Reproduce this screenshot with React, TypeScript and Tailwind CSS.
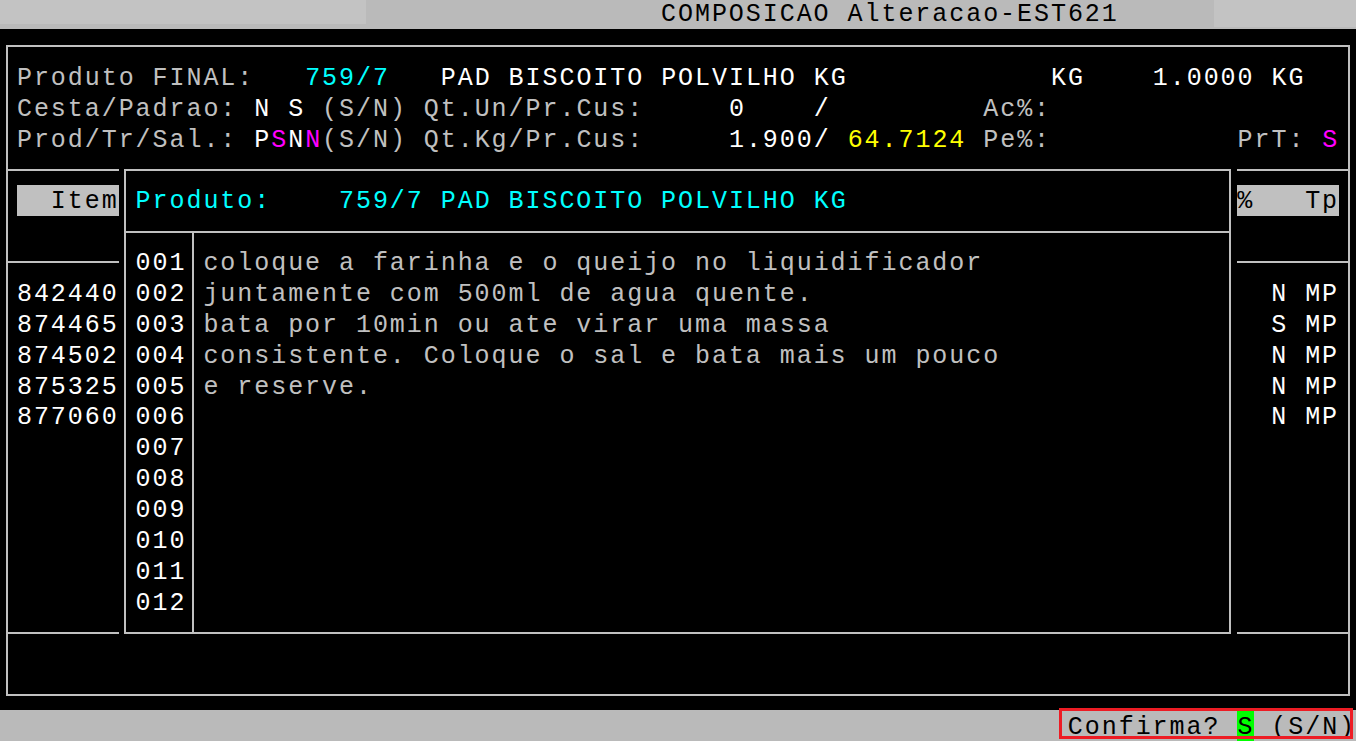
import React from "react";

const G = "text-[#c0c0c0]";
const W = "text-white";
const C = "text-[#00ffff]";
const M = "text-[#ff00ff]";
const Y = "text-[#ffff00]";

type Seg = [string, string];

function Row({ segs, className = "" }: { segs: Seg[]; className?: string }) {
  return (
    <div className={`h-[30.875px] leading-[33px] whitespace-pre ${className}`}>
      {segs.map(([t, c], i) => (
        <span key={i} className={c}>
          {t}
        </span>
      ))}
    </div>
  );
}

const tableRows: [string, string][] = [
  ["842440", "  N MP"],
  ["874465", "  S MP"],
  ["874502", "  N MP"],
  ["875325", "  N MP"],
  ["877060", "  N MP"],
  ["", ""],
  ["", ""],
  ["", ""],
  ["", ""],
  ["", ""],
  ["", ""],
];

const notes = [
  "coloque a farinha e o queijo no liquidificador",
  "juntamente com 500ml de agua quente.",
  "bata por 10min ou ate virar uma massa",
  "consistente. Coloque o sal e bata mais um pouco",
  "e reserve.",
  "",
  "",
  "",
  "",
  "",
  "",
  "",
];

export default function App() {
  return (
    <div className="relative w-[1356px] h-[741px] overflow-hidden bg-black font-['Liberation_Mono',monospace] text-[25px] tracking-[1.95px] text-[#c0c0c0]">
      {/* title bar */}
      <div className="h-[30.875px]">
        <div className="flex h-[29px] items-start bg-[#bababa] text-black">
          <div className="h-[24px] w-[366px] bg-[#c3c3c3]" />
          <div className="flex-1 pl-[295.05px] leading-[29px] whitespace-pre">
            COMPOSICAO Alteracao-EST621
          </div>
          <div className="h-[27px] w-[142px] bg-[#c3c3c3]" />
        </div>
      </div>

      {/* main frame */}
      <div className="h-[679.25px] pt-[14.44px]">
        <div className="mx-[6px] flex h-[650.38px] flex-col border-2 border-[#c0c0c0]">
          {/* header section */}
          <div className="h-[121.5px] pl-[8.95px] pt-[14.44px]">
            <Row
              segs={[
                ["Produto FINAL:", G],
                ["   ", G],
                ["759/7", C],
                ["   ", G],
                ["PAD BISCOITO POLVILHO KG", W],
                ["            ", G],
                ["KG", W],
                ["    ", G],
                ["1.0000 KG", W],
              ]}
            />
            <Row
              segs={[
                ["Cesta/Padrao: ", G],
                ["N S", W],
                [" (S/N) Qt.Un/Pr.Cus:     ", G],
                ["0", W],
                ["    ", G],
                ["/", W],
                ["         Ac%:", G],
              ]}
            />
            <Row
              segs={[
                ["Prod/Tr/Sal.: ", G],
                ["P", W],
                ["S", M],
                ["N", W],
                ["N", M],
                ["(S/N) Qt.Kg/Pr.Cus:     ", G],
                ["1.900/", W],
                [" ", G],
                ["64.7124", Y],
                [" Pe%:           PrT: ", G],
                ["S", M],
              ]}
            />
          </div>

          {/* table header */}
          <div className="h-[92.625px] border-t-2 border-[#c0c0c0] pt-[14.44px]">
            <div className="flex h-[30.875px] justify-between px-[8.95px] leading-[33px]">
              <span className="h-[30.875px] whitespace-pre bg-[#c0c0c0] text-black">  Item</span>
              <span className="h-[30.875px] whitespace-pre bg-[#c0c0c0] text-black">%   Tp</span>
            </div>
          </div>

          {/* table body */}
          <div className="h-[370.5px] border-t-2 border-[#c0c0c0] pt-[14.44px]">
            {tableRows.map(([l, r], i) => (
              <div
                key={i}
                className="flex h-[30.875px] justify-between px-[8.95px] leading-[33px] whitespace-pre text-white"
              >
                <span>{l}</span>
                <span>{r}</span>
              </div>
            ))}
          </div>

          {/* footer section */}
          <div className="h-[61.75px] border-t-2 border-[#c0c0c0]" />
        </div>
      </div>

      {/* status bar */}
      <div className="flex h-[30.875px] whitespace-pre bg-[#bababa] pl-[1067.85px] leading-[35px] text-black">
        <span>Confirma? </span>
        <span className="bg-[#00ff00]">S</span>
        <span> (S/N)</span>
      </div>

      {/* popup window */}
      <div className="absolute left-[118.65px] top-[154.375px] h-[494px] w-[1118.7px] bg-black pb-[14.44px] pl-[5.35px] pr-[6.35px] pt-[14.44px]">
        <div className="flex h-full flex-col border-2 border-[#c0c0c0]">
          <div className="h-[59.75px] pl-[9.6px] pt-[14.44px]">
            <Row segs={[["Produto:    759/7 PAD BISCOITO POLVILHO KG", C]]} />
          </div>
          <div className="flex flex-1 border-t-2 border-[#c0c0c0]">
            <div className="w-[68px] border-r-2 border-[#c0c0c0] pl-[9.6px] pt-[14.44px] text-white">
              {notes.map((_, i) => (
                <div key={i} className="h-[30.875px] leading-[33px]">
                  {String(i + 1).padStart(3, "0")}
                </div>
              ))}
            </div>
            <div className="flex-1 pl-[9.4px] pt-[14.44px]">
              {notes.map((t, i) => (
                <div key={i} className="h-[30.875px] whitespace-pre leading-[33px]">
                  {t}
                </div>
              ))}
            </div>
          </div>
        </div>
      </div>

      {/* red highlight annotation */}
      <div className="absolute left-[1059px] top-[708px] h-[31px] w-[294px] border-[3px] border-[#ed1c24]" />
    </div>
  );
}
